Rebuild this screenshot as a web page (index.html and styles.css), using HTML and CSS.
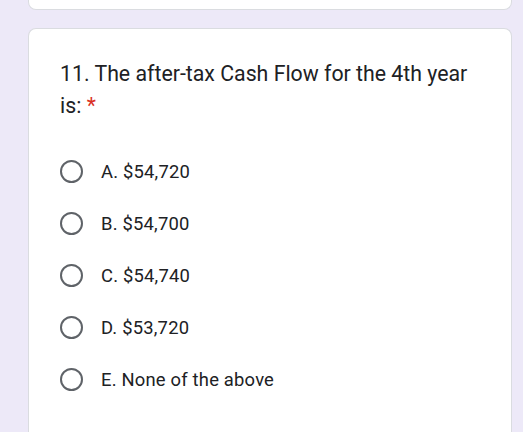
FILE: index.html
```html
<!DOCTYPE html>
<html>
<head>
<meta charset="utf-8">
<link rel="stylesheet" href="styles.css">
</head>
<body>
<div class="page">
  <div class="card card-prev"></div>
  <div class="card card-q">
    <div class="question"><span class="qtext">11. The after-tax Cash Flow for the 4th year is:</span> <span class="req">*</span></div>
    <div class="options">
      <div class="opt"><span class="radio"></span><span class="label">A. $54,720</span></div>
      <div class="opt"><span class="radio"></span><span class="label">B. $54,700</span></div>
      <div class="opt"><span class="radio"></span><span class="label">C. $54,740</span></div>
      <div class="opt"><span class="radio"></span><span class="label">D. $53,720</span></div>
      <div class="opt"><span class="radio"></span><span class="label">E. None of the above</span></div>
    </div>
  </div>
</div>
</body>
</html>
```
FILE: styles.css
```css
html, body {
  margin: 0;
  padding: 0;
  background: #ede9f8;
  height: 100%;
  overflow: hidden;
}
.page {
  padding: 0 11px 0 28px;
  font-family: Roboto, "Liberation Sans", sans-serif;
  color: #202124;
}
.card {
  background: #fff;
  border: 1px solid #dadce0;
  border-radius: 8px;
}
.card-prev {
  height: 9px;
  border-top: none;
  border-radius: 0 0 8px 8px;
}
.card-q {
  box-sizing: border-box;
  margin-top: 18px;
  padding: 29px 31px 0;
  height: 404px;
  border-bottom: none;
  border-radius: 8px 8px 0 0;
}
.question {
  font-size: 21.3px;
  line-height: 32px;
}
.req {
  color: #d93025;
}
.options {
  margin-top: 23px;
  display: flex;
  flex-direction: column;
}
.opt {
  display: flex;
  align-items: center;
  height: 52.1px;
}
.radio {
  width: 19px;
  height: 19px;
  border: 2.5px solid #5f6368;
  border-radius: 50%;
  flex: none;
}
.label {
  margin-left: 18px;
  font-size: 18.4px;
  letter-spacing: 0.2px;
}
```
